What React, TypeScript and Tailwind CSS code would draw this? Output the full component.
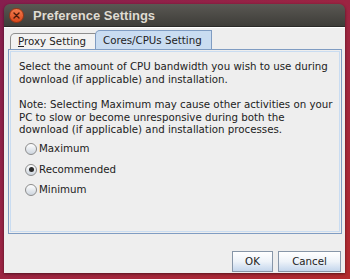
import React from "react";

function Radio({ label, checked }: { label: string; checked?: boolean }) {
  return (
    <div className="flex items-center h-[13px]">
      <div className="w-[12px] h-[12px] rounded-full border border-[#8c8c8c] bg-gradient-to-b from-[#ffffff] to-[#cdd5de] flex items-center justify-center shrink-0">
        {checked && <div className="w-[5px] h-[5px] rounded-full bg-[#2a2a2a]" />}
      </div>
      <span className="ml-[2px] text-[10.25px] text-[#222] whitespace-nowrap">{label}</span>
    </div>
  );
}

export default function App() {
  return (
    <div
      className="w-[350px] h-[279px] bg-gradient-to-br from-[#861e4e] via-[#9c2442] to-[#b32a2d] pt-[4px] pl-[4px]"
      style={{ fontFamily: '"DejaVu Sans", sans-serif' }}
    >
      <div className="w-[341px] h-[269px] flex flex-col rounded-t-[6px] overflow-hidden shadow-[0_1px_3px_rgba(0,0,0,0.5)]">
        {/* Title bar */}
        <div className="h-[23px] bg-gradient-to-b from-[#5a5853] to-[#3e3d39] flex items-center border-b border-[#2b2a28] shrink-0">
          <div className="ml-[5px] w-[15px] h-[15px] rounded-full bg-gradient-to-b from-[#f27a4b] to-[#d9471a] border border-[#9c3414] flex items-center justify-center">
            <svg width="7" height="7" viewBox="0 0 7 7">
              <path d="M1 1 L6 6 M6 1 L1 6" stroke="#4a1a0a" strokeWidth="1.4" strokeLinecap="round" />
            </svg>
          </div>
          <span
            className="ml-[9px] text-[13px] font-bold text-[#dfdbd2] leading-none"
            style={{ fontFamily: '"Liberation Sans", Arial, sans-serif' }}
          >
            Preference Settings
          </span>
        </div>
        {/* Body */}
        <div className="flex-1 bg-[#eeeeee] border-t border-[#ffffff] flex flex-col pt-[2px] pb-[2px] px-[4px]">
          {/* Tabs */}
          <div className="flex items-end h-[19px] pl-[2px]">
            <div className="h-[16px] w-[86px] bg-[#f2f2f2] border border-b-0 border-[#8e8e8e] rounded-tl-[5px] flex items-center pl-[7px] text-[10.25px] text-[#222] leading-none whitespace-nowrap">
              <span><span className="underline">P</span>roxy Setting</span>
            </div>
            <div className="h-[19px] w-[117px] bg-[#c9dcf1] border border-b-0 border-[#7f9cc2] rounded-tl-[5px] flex items-center pl-[7px] text-[10.25px] text-[#222] leading-none -ml-[1px] whitespace-nowrap">
              Cores/CPUs Setting
            </div>
          </div>
          {/* Panel */}
          <div className="w-[334px] h-[185px] border border-[#7f9cc2] bg-[#eeeeee] p-[1px]">
            <div className="w-full h-full border border-[#c9dcf1] pl-[8px] pt-[8px]">
              <p className="text-[10.25px] leading-[13px] text-[#222] whitespace-nowrap">
                Select the amount of CPU bandwidth you wish to use during
                <br />
                download (if applicable) and installation.
              </p>
              <p className="text-[10.25px] leading-[12.5px] text-[#222] mt-[12px] whitespace-nowrap">
                Note: Selecting Maximum may cause other activities on your
                <br />
                PC to slow or become unresponsive during both the
                <br />
                download (if applicable) and installation processes.
              </p>
              <div className="flex flex-col gap-[7.5px] mt-[7px] pl-[6px]">
                <Radio label="Maximum" />
                <Radio label="Recommended" checked />
                <Radio label="Minimum" />
              </div>
            </div>
          </div>
          {/* Buttons */}
          <div className="flex justify-end gap-[5px] mt-[17px]">
            <button className="w-[41px] h-[21px] border border-[#8796a8] bg-gradient-to-b from-[#ffffff] via-[#eef3f9] to-[#c4d6ec] text-[10.25px] text-[#222] leading-none">
              OK
            </button>
            <button className="w-[63px] h-[21px] border border-[#8796a8] bg-gradient-to-b from-[#ffffff] via-[#eef3f9] to-[#c4d6ec] text-[10.25px] text-[#222] leading-none">
              Cancel
            </button>
          </div>
        </div>
      </div>
    </div>
  );
}
